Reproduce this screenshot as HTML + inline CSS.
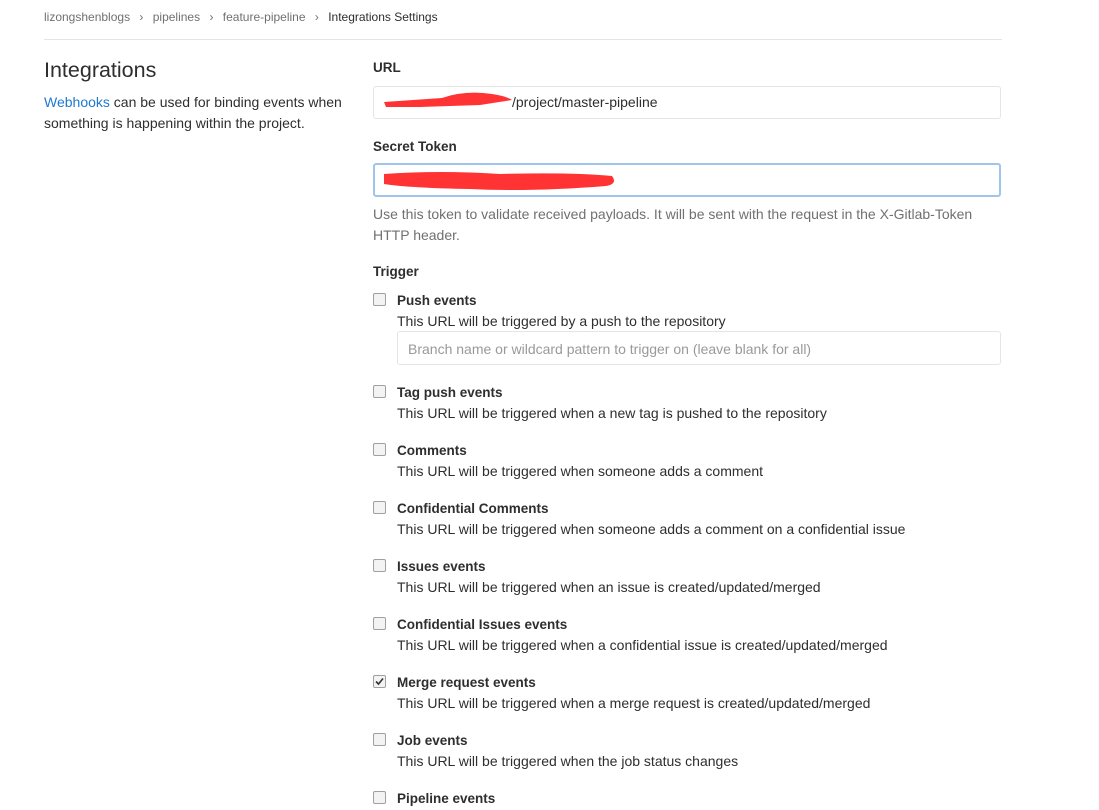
<!DOCTYPE html>
<html><head><style>
body{margin:0;width:1099px;height:810px;overflow:hidden;background:#fff;font-family:"Liberation Sans",sans-serif;color:#2e2e2e;position:relative}
.a{position:absolute;white-space:nowrap}
.bc{font-size:12px;color:#707070;top:10px}
.inp{position:absolute;left:373px;width:628px;height:33px;border:1px solid #e5e5e5;border-radius:3px;box-sizing:border-box}
.cb{position:absolute;left:373px;width:11px;height:11px;border:1px solid #a0a0a0;border-radius:2px;background:#f3f3f3}
.t{position:absolute;left:397px;font-size:13.5px;font-weight:bold;color:#2e2e2e}
.d{position:absolute;left:397px;font-size:14px;color:#2e2e2e}
</style></head><body>
<div class="a bc" style="left:44px">lizongshenblogs <span style="margin:0 6px">›</span> pipelines <span style="margin:0 6px">›</span> feature-pipeline <span style="margin:0 6px">›</span> <span style="color:#2e2e2e">Integrations Settings</span></div>
<div style="position:absolute;left:44px;top:39px;width:958px;height:1px;background:#e5e5e5"></div>
<div class="a" style="left:44px;top:58px;font-size:21.5px;color:#2e2e2e">Integrations</div>
<div class="a" style="left:44px;top:92px;font-size:14px;line-height:21px"><span style="color:#1f78d1">Webhooks</span> can be used for binding events when<br>something is happening within the project.</div>
<div class="a" style="left:373px;top:60px;font-size:13.5px;font-weight:bold">URL</div>
<div class="inp" style="top:86px"></div>
<div class="a" style="left:512px;top:94px;font-size:14px">/project/master-pipeline</div>
<svg class="a" style="left:380px;top:88px" width="140" height="26"><path d="M4 14 L62 10 Q85 2 112 6 Q126 8 132 12 L100 17 L40 19 L6 19Z" fill="#f33"/></svg>
<div class="a" style="left:373px;top:139px;font-size:13.5px;font-weight:bold">Secret Token</div>
<div class="inp" style="top:163px;height:34px;border:2px solid #9fc5ef"></div>
<svg class="a" style="left:380px;top:166px" width="240" height="28"><path d="M4 8 Q60 4 120 8 Q190 6 232 10 Q238 18 226 20 Q150 26 90 23 Q30 22 4 18Z" fill="#f33"/></svg>
<div class="a" style="left:373px;top:204px;font-size:14px;line-height:21px;color:#707070">Use this token to validate received payloads. It will be sent with the request in the X-Gitlab-Token<br>HTTP header.</div>
<div class="a" style="left:373px;top:264px;font-size:13.5px;font-weight:bold">Trigger</div>

<div class="cb" style="top:293px"></div><div class="t a" style="top:293px">Push events</div><div class="d a" style="top:313px">This URL will be triggered by a push to the repository</div>
<div class="inp" style="left:397px;width:604px;top:331px;height:34px"></div><div class="a" style="left:408px;top:341px;font-size:14px;color:#999">Branch name or wildcard pattern to trigger on (leave blank for all)</div>

<div class="cb" style="top:385px"></div><div class="t a" style="top:385px">Tag push events</div><div class="d a" style="top:405px">This URL will be triggered when a new tag is pushed to the repository</div>
<div class="cb" style="top:443px"></div><div class="t a" style="top:443px">Comments</div><div class="d a" style="top:463px">This URL will be triggered when someone adds a comment</div>
<div class="cb" style="top:501px"></div><div class="t a" style="top:501px">Confidential Comments</div><div class="d a" style="top:521px">This URL will be triggered when someone adds a comment on a confidential issue</div>
<div class="cb" style="top:559px"></div><div class="t a" style="top:559px">Issues events</div><div class="d a" style="top:579px">This URL will be triggered when an issue is created/updated/merged</div>
<div class="cb" style="top:617px"></div><div class="t a" style="top:617px">Confidential Issues events</div><div class="d a" style="top:637px">This URL will be triggered when a confidential issue is created/updated/merged</div>
<div class="cb" style="top:675px"><svg width="11" height="11" style="position:absolute;left:0;top:0"><path d="M2 5.5 L4.5 8 L9 2.5" stroke="#333" stroke-width="1.6" fill="none"/></svg></div><div class="t a" style="top:675px">Merge request events</div><div class="d a" style="top:695px">This URL will be triggered when a merge request is created/updated/merged</div>
<div class="cb" style="top:733px"></div><div class="t a" style="top:733px">Job events</div><div class="d a" style="top:753px">This URL will be triggered when the job status changes</div>
<div class="cb" style="top:791px"></div><div class="t a" style="top:791px">Pipeline events</div>
</body></html>
